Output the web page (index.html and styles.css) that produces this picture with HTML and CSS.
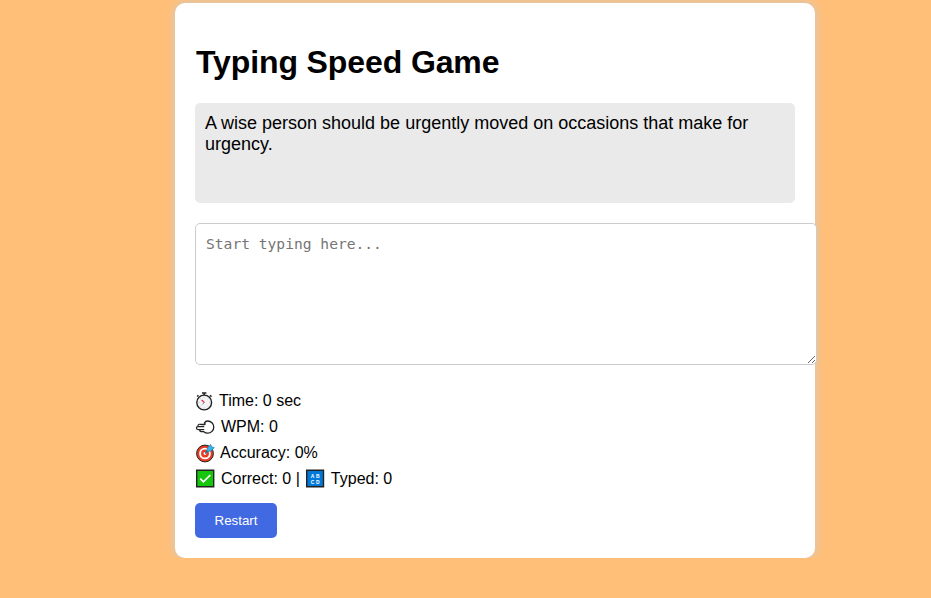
FILE: index.html
```html
<!DOCTYPE html>
<html lang="en">
<head>
<meta charset="utf-8">
<title>Typing Speed Game</title>
<link rel="stylesheet" href="styles.css">
</head>
<body>
<main class="container">
  <h1>Typing Speed Game</h1>
  <div class="quote">A wise person should be urgently moved on occasions that make for urgency.</div>
  <textarea class="input" placeholder="Start typing here..."></textarea>
  <div class="stats">
    <div class="row">
      <svg class="icon time" viewBox="0 0 19 20"><path d="M7 2h4.4M9.2 2v2M15 4.300l1.500 1.400M3.400 4.300L2.200 5.500" fill="none" stroke="#222" stroke-width="1.5"/><circle cx="9.200" cy="11.500" r="7.400" fill="#f4f4f6" stroke="#222" stroke-width="1.400"/><path d="M9.200 5.500v1M9.200 16.500v1M3.500 11.500h1M14 11.500h1M5.300 7.500l.7.7M13.200 7.500l-.7.7M5.300 15.500l.7-.7M13.200 15.500l-.7-.7" stroke="#aaa" stroke-width=".7"/><path d="M6.600 8.900l2.700 2.600" stroke="#e02030" stroke-width="1.100"/><path d="M9.300 11.500l-2 2" stroke="#777" stroke-width=".9"/></svg>
      <span>Time: 0 sec</span>
    </div>
    <div class="row">
      <svg class="icon wpm" viewBox="0 0 20 20"><path d="M4 7.500h5.200c1.200 0 1.200-1.200.2-1.500C10 4.700 11.200 4 12.700 4c3.300 0 6.100 2.600 6.100 6s-2.800 6.200-6.100 6.200c-1.600 0-3-.7-4.200-1.700H5.800c-1.300 0-1.300-2 0-2H3.200" fill="#fff" stroke="#222" stroke-width="1.300" stroke-linejoin="round" stroke-linecap="round"/><path d="M4 7.500c-1.400 0-1.400 2.200 0 2.200h4.800M4 9.700H2.800c-1.800 0-1.800 2.800 0 2.800h6" fill="#fff" stroke="#222" stroke-width="1.200" stroke-linecap="round"/></svg>
      <span>WPM: 0</span>
    </div>
    <div class="row">
      <svg class="icon accuracy" viewBox="0 0 20 20"><circle cx="10" cy="10.500" r="8.400" fill="#e83b24" stroke="#222" stroke-width="1"/><circle cx="10" cy="10.500" r="4.900" fill="none" stroke="#fff" stroke-width="1.900"/><circle cx="10" cy="10.500" r="1.400" fill="#fff"/><path d="M10 10.500l4.500-4.500" stroke="#16709e" stroke-width="1.200"/><path d="M11.700 8.800l.7-4 3.200-3.400 1.100 2.300 2.600 1-3.600 3.400z" fill="#35b5f0" stroke="#16709e" stroke-width=".6"/></svg>
      <span>Accuracy: 0%</span>
    </div>
    <div class="row">
      <svg class="icon correct" viewBox="0 0 20 20"><path d="M1.700 1.200h17v16.600h-17z" fill="#16c60c" stroke="#222" stroke-width="1.400"/><path d="M5.200 9.700l3.200 3.200 6.900-6.900" fill="none" stroke="#fff" stroke-width="1.700"/></svg>
      <span>Correct: 0 |</span>
      <svg class="icon typed" viewBox="0 0 20 20"><path d="M1.700 1.200h16.800v16.600H1.700z" fill="#0078d7" stroke="#222" stroke-width="1.400"/><g class="letters"><text x="5.700" y="8.500">A</text><text x="10.900" y="8.500">B</text><text x="5.700" y="14.500">C</text><text x="10.900" y="14.500">D</text></g></svg>
      <span>Typed: 0</span>
    </div>
  </div>
  <button class="restart" type="button">Restart</button>
</main>
</body>
</html>
```
FILE: styles.css
```css
body {
  margin: 0;
  padding-top: 3px;
  background: #ffbf78;
  color: #000;
  font-family: "Liberation Sans", Arial, sans-serif;
}

.container {
  width: 600px;
  height: 515px;
  margin-left: 175px;
  padding: 20px;
  background: #fff;
  border-radius: 10px;
  box-shadow: 0 0 10px #ccc;
}

h1 {
  margin: 20px 0 22px;
  padding-left: 1px;
  font-size: 32px;
  line-height: 38px;
  letter-spacing: -0.11px;
}

.quote {
  height: 80px;
  padding: 10px;
  background: #eaeaea;
  border-radius: 5px;
  font-size: 18px;
  line-height: 21px;
}

.input {
  display: block;
  width: 600px;
  height: 120px;
  margin: 20px 0 23px;
  padding: 10px;
  border: 1px solid #ccc;
  border-radius: 5px;
  font: 14.62px/20px "DejaVu Sans Mono", monospace;
}

.row {
  display: flex;
  align-items: center;
  height: 26px;
  font-size: 16px;
  white-space: pre;
}

.icon {
  flex: none;
  width: 20px;
  height: 20px;
}

.time {
  width: 19px;
  margin-right: 5px;
}

.wpm {
  margin-right: 6px;
}

.accuracy {
  margin-right: 5px;
}

.correct {
  margin-right: 6px;
}

.typed {
  margin: 0 6px 0 5px;
}

.letters {
  fill: #fff;
  font: bold 5px "Liberation Sans", sans-serif;
}

.restart {
  display: block;
  width: 82px;
  height: 35px;
  margin-top: 11px;
  padding: 0;
  border: 0;
  border-radius: 5px;
  background: #4169e1;
  color: #fff;
  font: 13.333px "Liberation Sans", Arial, sans-serif;
}
```
